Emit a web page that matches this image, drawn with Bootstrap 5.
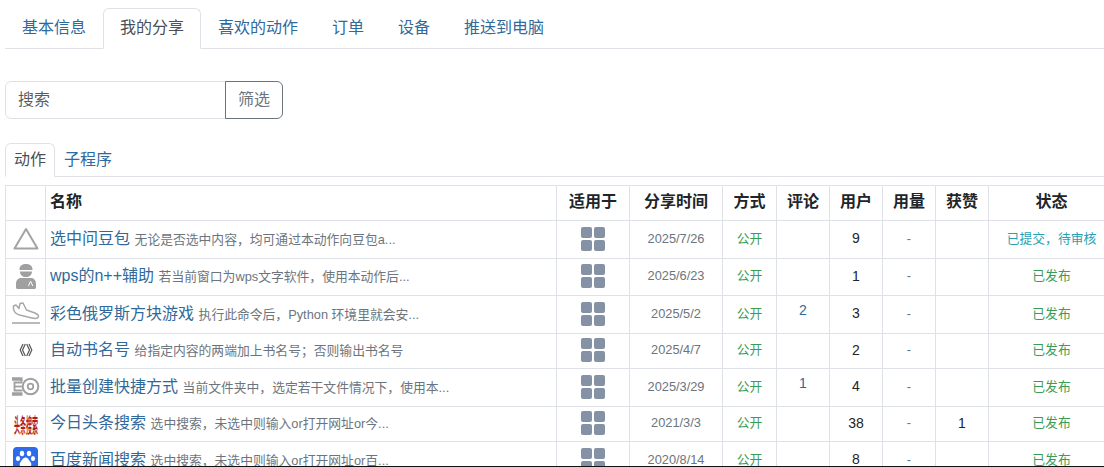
<!DOCTYPE html>
<html lang="zh-CN">
<head>
<meta charset="utf-8">
<title>我的分享</title>
<link rel="stylesheet" href="https://cdn.jsdelivr.net/npm/bootstrap@5.3.0/dist/css/bootstrap.min.css">
<style>
html,body{height:100%;overflow:hidden;background:#fff}
body{font-family:"Liberation Sans","Noto Sans CJK SC",sans-serif;font-size:14px;color:#212529}
.page-frame{height:467px;overflow:hidden;padding:8px 0 0 5px;border-bottom:1px solid #111}
.main-tabs{margin-bottom:32px;font-size:16px;height:41px}
.main-tabs .nav-link,.sub-tabs .nav-link{color:#2f6a9b;line-height:24px}
.main-tabs .nav-link{padding:7px 16px 8px}
.main-tabs .nav-link.active,.sub-tabs .nav-link.active{color:#495057}
.search-group{width:278px;margin-bottom:24px}
.search-group .form-control,.search-group .btn{font-size:16px}
.search-group .btn{color:#6c757d;border-color:#6c757d}
.sub-tabs{font-size:16px;height:34px;margin-bottom:8px}
.sub-tabs .nav-link{padding:4px 8px;line-height:24px}
.share-table{table-layout:fixed;width:1110px;margin:0;font-size:12.8px;--bs-table-color:#212529}
.share-table>:not(caption)>*>*{padding:0 5px 2px;vertical-align:middle;text-align:center}
.share-table th{font-size:16px;line-height:24px;color:#212529}
.share-table>tbody>tr>td.name-cell,.share-table>thead>tr>th.name-cell{text-align:left;white-space:nowrap;overflow:hidden;padding-left:4px}
.share-table>tbody>tr>td.icon-cell{padding:0 0 2px;line-height:0}
.share-table>tbody>tr>td.logo-cell{padding:4px 0 0}
.r35{height:35px}.r37{height:37px}.r38{height:38px}
.name-link{font-size:16px;color:#2f6a9b;text-decoration:none}
.desc{color:#6c757d;margin-left:1px}
.date{color:#6c757d}
.pub{color:#3a9d56}
.pend{color:#2b9fb3}
.dash{color:#6c757d}
.cmt{color:#2f6a9b;text-decoration:none;display:inline-block;position:relative;top:-3px;font-size:14px}
.qty{font-size:14px}
.win{display:inline-grid;grid-template-columns:11px 11px;grid-auto-rows:11px;gap:2px;vertical-align:middle}
.win i{display:block;background:#8591a5;border-radius:2px}
.rank-logo{display:inline-block;font-size:20px;line-height:20px;height:20px;width:80px;margin:0 -28px;font-weight:700;color:#b01c24;transform:scaleX(.3);white-space:nowrap}
svg{vertical-align:middle}
</style>
</head>
<body>
<div class="page-frame">
  <ul class="nav nav-tabs main-tabs">
    <li class="nav-item"><a class="nav-link" href="#">基本信息</a></li>
    <li class="nav-item"><a class="nav-link active" href="#">我的分享</a></li>
    <li class="nav-item"><a class="nav-link" href="#">喜欢的动作</a></li>
    <li class="nav-item"><a class="nav-link" href="#">订单</a></li>
    <li class="nav-item"><a class="nav-link" href="#">设备</a></li>
    <li class="nav-item"><a class="nav-link" href="#">推送到电脑</a></li>
  </ul>
  <div class="input-group search-group">
    <input type="text" class="form-control" placeholder="搜索">
    <button class="btn btn-outline-secondary" type="button">筛选</button>
  </div>
  <ul class="nav nav-tabs sub-tabs">
    <li class="nav-item"><a class="nav-link active" href="#">动作</a></li>
    <li class="nav-item"><a class="nav-link" href="#">子程序</a></li>
  </ul>
  <table class="table table-bordered share-table">
    <colgroup><col style="width:40px"><col style="width:511px"><col style="width:73px"><col style="width:93px"><col style="width:54px"><col style="width:53px"><col style="width:53px"><col style="width:53px"><col style="width:53px"><col></colgroup>
    <thead>
      <tr class="r35"><th></th><th class="name-cell">名称</th><th>适用于</th><th>分享时间</th><th>方式</th><th>评论</th><th>用户</th><th>用量</th><th>获赞</th><th>状态</th></tr>
    </thead>
    <tbody>
      <tr class="r38">
        <td class="icon-cell"><svg width="26" height="23" viewBox="0 0 26 23"><path d="M13 2 L24.500 21.500 H1.500 Z" fill="none" stroke="#a3a3a3" stroke-width="2" stroke-linejoin="round"/></svg></td>
        <td class="name-cell"><a class="name-link" href="#">选中问豆包</a> <span class="desc">无论是否选中内容，均可通过本动作向豆包a...</span></td>
        <td class="icon-cell"><span class="win"><i></i><i></i><i></i><i></i></span></td>
        <td class="date">2025/7/26</td><td class="pub">公开</td><td></td><td class="qty">9</td><td class="dash">-</td><td></td><td class="pend">已提交，待审核</td>
      </tr>
      <tr class="r37">
        <td class="icon-cell"><svg width="20" height="25" viewBox="0 0 20 25"><path d="M3.500 5.500C3.500 1.500 6.500 0 10 0s6.500 1.500 6.500 5.500v.5h-13zM4 7.500h12C16 11 13.500 13 10 13S4 11 4 7.500zM5 14h10c3 0 5 2.500 5 6v3.500c0 .8-.7 1.500-1.500 1.500h-17C.7 25 0 24.300 0 23.500V20c0-3.500 2-6 5-6z" fill="#a0a0a0"/><path d="M12.500 22l1.800-4.500h.6l1.800 4.500" fill="none" stroke="#fff" stroke-width="1"/></svg></td>
        <td class="name-cell"><a class="name-link" href="#">wps的n++辅助</a> <span class="desc">若当前窗口为wps文字软件，使用本动作后...</span></td>
        <td class="icon-cell"><span class="win"><i></i><i></i><i></i><i></i></span></td>
        <td class="date">2025/6/23</td><td class="pub">公开</td><td></td><td class="qty">1</td><td class="dash">-</td><td></td><td class="pub">已发布</td>
      </tr>
      <tr class="r38">
        <td class="icon-cell"><svg width="28" height="23" viewBox="0 0 28 23"><path d="M1.500 4 L4 3 L7 6.500 L8 1.500 L11 1 L14.500 8 L23 11 C26 12.300 27 13.800 26.300 15.200 C25.500 16.700 23 16.700 20 16 L7.500 13 C4 12 2 10 1.500 7 Z" fill="none" stroke="#a8a8a8" stroke-width="1.500" stroke-linejoin="round"/><path d="M0 21H28" stroke="#a3a3a3" stroke-width="1.500"/></svg></td>
        <td class="name-cell"><a class="name-link" href="#">彩色俄罗斯方块游戏</a> <span class="desc">执行此命令后，Python 环境里就会安...</span></td>
        <td class="icon-cell"><span class="win"><i></i><i></i><i></i><i></i></span></td>
        <td class="date">2025/5/2</td><td class="pub">公开</td><td><a class="cmt" href="#">2</a></td><td class="qty">3</td><td class="dash">-</td><td></td><td class="pub">已发布</td>
      </tr>
      <tr class="r35">
        <td class="icon-cell"><svg width="14" height="14" viewBox="0 0 14 14"><path d="M4 1 L1.200 7 L4 13 M6.300 1 L3.500 7 L6.300 13 M7.700 1 L10.500 7 L7.700 13 M10 1 L12.800 7 L10 13" fill="none" stroke="#555" stroke-width="1.200"/></svg></td>
        <td class="name-cell"><a class="name-link" href="#">自动书名号</a> <span class="desc">给指定内容的两端加上书名号；否则输出书名号</span></td>
        <td class="icon-cell"><span class="win"><i></i><i></i><i></i><i></i></span></td>
        <td class="date">2025/4/7</td><td class="pub">公开</td><td></td><td class="qty">2</td><td class="dash">-</td><td></td><td class="pub">已发布</td>
      </tr>
      <tr class="r38">
        <td class="icon-cell"><svg width="28" height="19" viewBox="0 0 28 19"><circle cx="18.500" cy="9.500" r="7.800" fill="none" stroke="#a0a0a0" stroke-width="2"/><circle cx="18.500" cy="9.500" r="2.800" fill="none" stroke="#a0a0a0" stroke-width="1.800"/><path d="M0 2h10.500M0 17h10.500" stroke="#a0a0a0" stroke-width="3.500"/><path d="M9.500 2v3.500H2.500v8h8" fill="none" stroke="#a0a0a0" stroke-width="1.800"/><path d="M2.500 9.500H10" stroke="#a0a0a0" stroke-width="1.800"/></svg></td>
        <td class="name-cell"><a class="name-link" href="#">批量创建快捷方式</a> <span class="desc">当前文件夹中，选定若干文件情况下，使用本...</span></td>
        <td class="icon-cell"><span class="win"><i></i><i></i><i></i><i></i></span></td>
        <td class="date">2025/3/29</td><td class="pub">公开</td><td><a class="cmt" href="#">1</a></td><td class="qty">4</td><td class="dash">-</td><td></td><td class="pub">已发布</td>
      </tr>
      <tr class="r35">
        <td class="icon-cell logo-cell"><span class="rank-logo">头条搜索</span></td>
        <td class="name-cell"><a class="name-link" href="#">今日头条搜索</a> <span class="desc">选中搜索，未选中则输入or打开网址or今...</span></td>
        <td class="icon-cell"><span class="win"><i></i><i></i><i></i><i></i></span></td>
        <td class="date">2021/3/3</td><td class="pub">公开</td><td></td><td class="qty">38</td><td class="dash">-</td><td class="qty">1</td><td class="pub">已发布</td>
      </tr>
      <tr class="r38">
        <td class="icon-cell"><svg width="25" height="25" viewBox="0 0 25 25"><rect width="25" height="25" rx="4" fill="#2f6be8"/><ellipse cx="9" cy="6.500" rx="2.200" ry="2.800" fill="#fff"/><ellipse cx="16" cy="6.500" rx="2.200" ry="2.800" fill="#fff"/><ellipse cx="5" cy="11.500" rx="2.100" ry="2.600" fill="#fff"/><ellipse cx="20" cy="11.500" rx="2.100" ry="2.600" fill="#fff"/><path d="M12.500 10.500c2.500 0 3.500 2.500 5 4.500 1.500 2 1 5-1.500 5-1.500 0-2-.5-3.500-.5s-2 .5-3.500.5c-2.500 0-3-3-1.500-5 1.500-2 2.500-4.500 5-4.500z" fill="#fff"/></svg></td>
        <td class="name-cell"><a class="name-link" href="#">百度新闻搜索</a> <span class="desc">选中搜索，未选中则输入or打开网址or百...</span></td>
        <td class="icon-cell"><span class="win"><i></i><i></i><i></i><i></i></span></td>
        <td class="date">2020/8/14</td><td class="pub">公开</td><td></td><td class="qty">8</td><td class="dash">-</td><td></td><td class="pub">已发布</td>
      </tr>
    </tbody>
  </table>
</div>
<script src="https://cdn.jsdelivr.net/npm/bootstrap@5.3.0/dist/js/bootstrap.bundle.min.js"></script>
</body>
</html>
